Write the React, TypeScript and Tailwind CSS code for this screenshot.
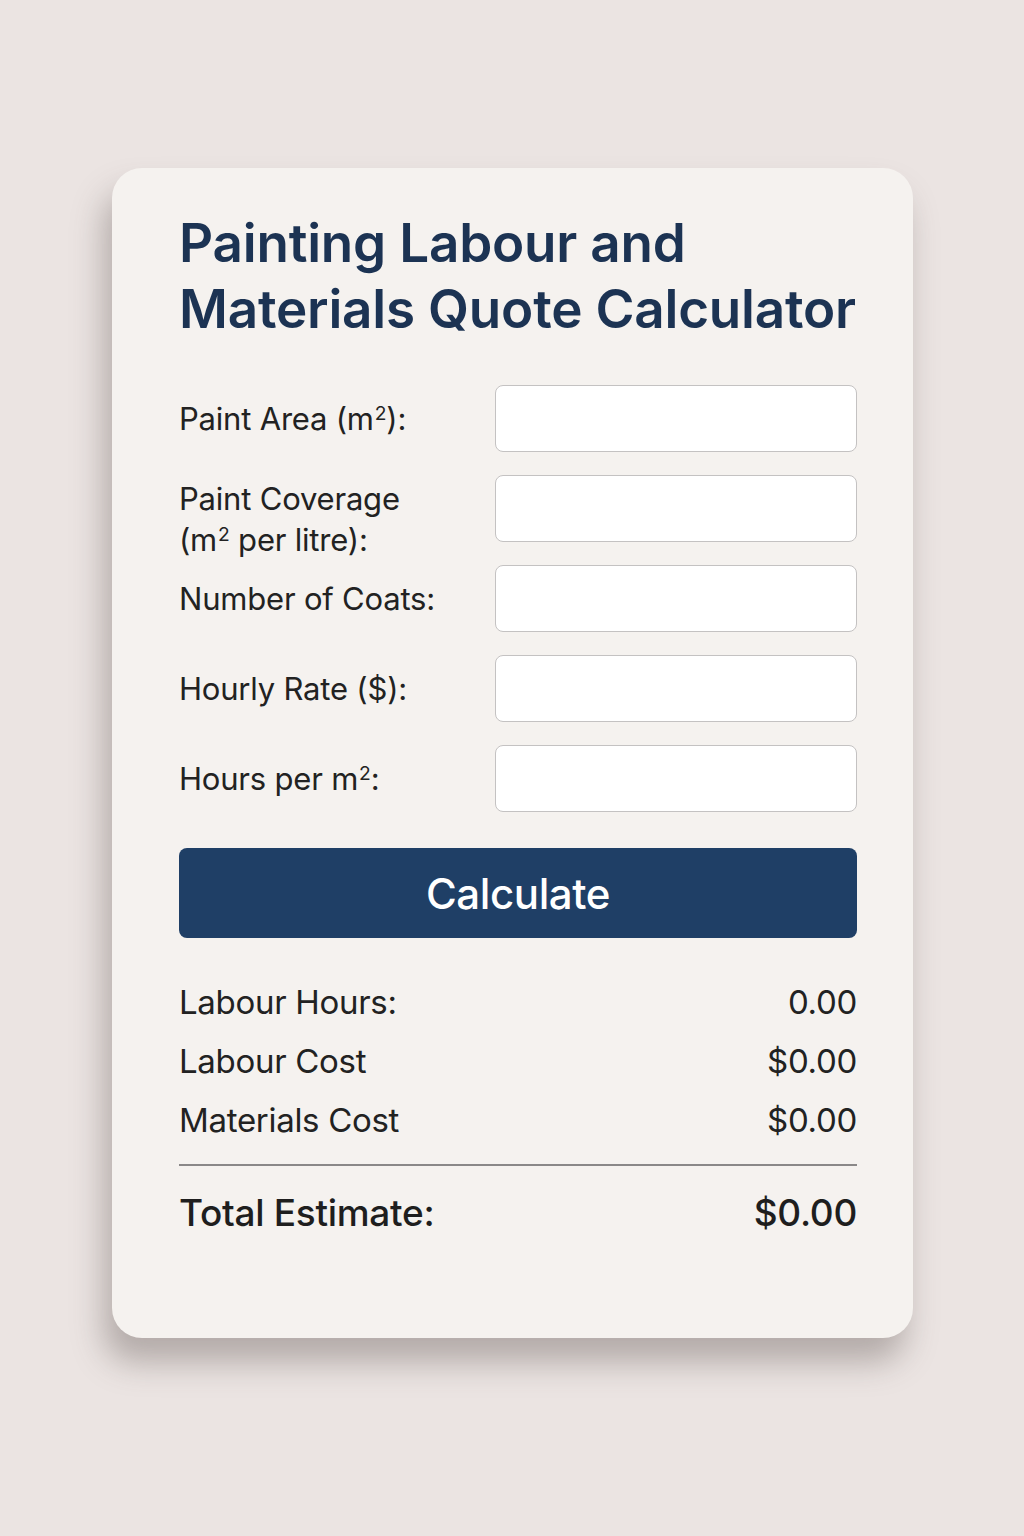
import { useState } from "react";

// Painting quote calculator — inputs on the left/right grid, totals below.

type Field = { key: string; label: React.ReactNode; labelClass?: string };

const Sq = () => <sup className="text-[0.62em] relative -top-[0.5em] ml-[1px]">2</sup>;

const FIELDS: Field[] = [
  { key: "area", label: <>Paint Area (m<Sq />):</> },
  {
    key: "coverage",
    label: (
      <>
        Paint Coverage
        <br />
        (m<Sq /> per litre):
      </>
    ),
    labelClass: "pt-[20px]",
  },
  { key: "coats", label: "Number of Coats:" },
  { key: "rate", label: "Hourly Rate ($):" },
  { key: "hours", label: <>Hours per m<Sq />:</> },
];

export default function App() {
  const [values, setValues] = useState<Record<string, string>>({});
  const [result, setResult] = useState({ hours: 0, labour: 0, materials: 0 });

  function calculate() {
    const n = (k: string) => parseFloat(values[k] ?? "") || 0;
    const hours = n("area") * n("hours") * Math.max(n("coats"), 1);
    const labour = hours * n("rate");
    const litres = n("coverage") > 0 ? (n("area") * n("coats")) / n("coverage") : 0;
    setResult({ hours, labour, materials: litres * 20 });
  }

  const total = result.labour + result.materials;

  return (
    <div className="min-h-screen w-full bg-[#ebe4e2] pt-[168px] font-['Inter',sans-serif]">
      <div className="ml-[112px] w-[801px] h-[1170px] rounded-[30px] bg-[#f5f2ef] pl-[67px] pr-[56px] pt-[42px] shadow-[-8px_24px_32px_rgba(90,80,75,0.38)]">
        <h1 className="text-[53px] leading-[66px] font-semibold tracking-[-0.2px] text-[#1c3353]">
          Painting Labour and
          <br />
          Materials Quote Calculator
        </h1>

        <div className="mt-[43px] flex flex-col gap-[23px]">
          {FIELDS.map((f) => (
            <div key={f.key} className="h-[67px] flex items-center justify-between">
              <label className={`text-[31px] leading-[41px] text-[#222] tracking-[-0.2px] ${f.labelClass ?? ""}`}>
                {f.label}
              </label>
              <input
                className="w-[362px] h-[67px] rounded-[8px] border border-[#c4c2c2] bg-white px-4 text-[26px] outline-none"
                value={values[f.key] ?? ""}
                onChange={(e) => setValues({ ...values, [f.key]: e.target.value })}
              />
            </div>
          ))}
        </div>

        <button
          onClick={calculate}
          className="mt-[36px] w-full h-[90px] rounded-[8px] bg-[#1f3f66] text-white text-[42px] font-medium tracking-[-0.4px]"
        >
          Calculate
        </button>

        <div className="mt-[45px] flex flex-col gap-[20px] text-[33px] leading-[39px] text-[#222] tracking-[-0.3px]">
          <div className="flex justify-between">
            <span>Labour Hours:</span>
            <span>{result.hours.toFixed(2)}</span>
          </div>
          <div className="flex justify-between">
            <span>Labour Cost</span>
            <span>${result.labour.toFixed(2)}</span>
          </div>
          <div className="flex justify-between">
            <span>Materials Cost</span>
            <span>${result.materials.toFixed(2)}</span>
          </div>
        </div>

        <div className="mt-[24px] h-[2px] bg-[#8a8888]" />

        <div className="mt-[25px] flex justify-between text-[37px] leading-[44px] font-medium text-[#1e1e1e] tracking-[-0.3px]">
          <span>Total Estimate:</span>
          <span>${total.toFixed(2)}</span>
        </div>
      </div>
    </div>
  );
}
